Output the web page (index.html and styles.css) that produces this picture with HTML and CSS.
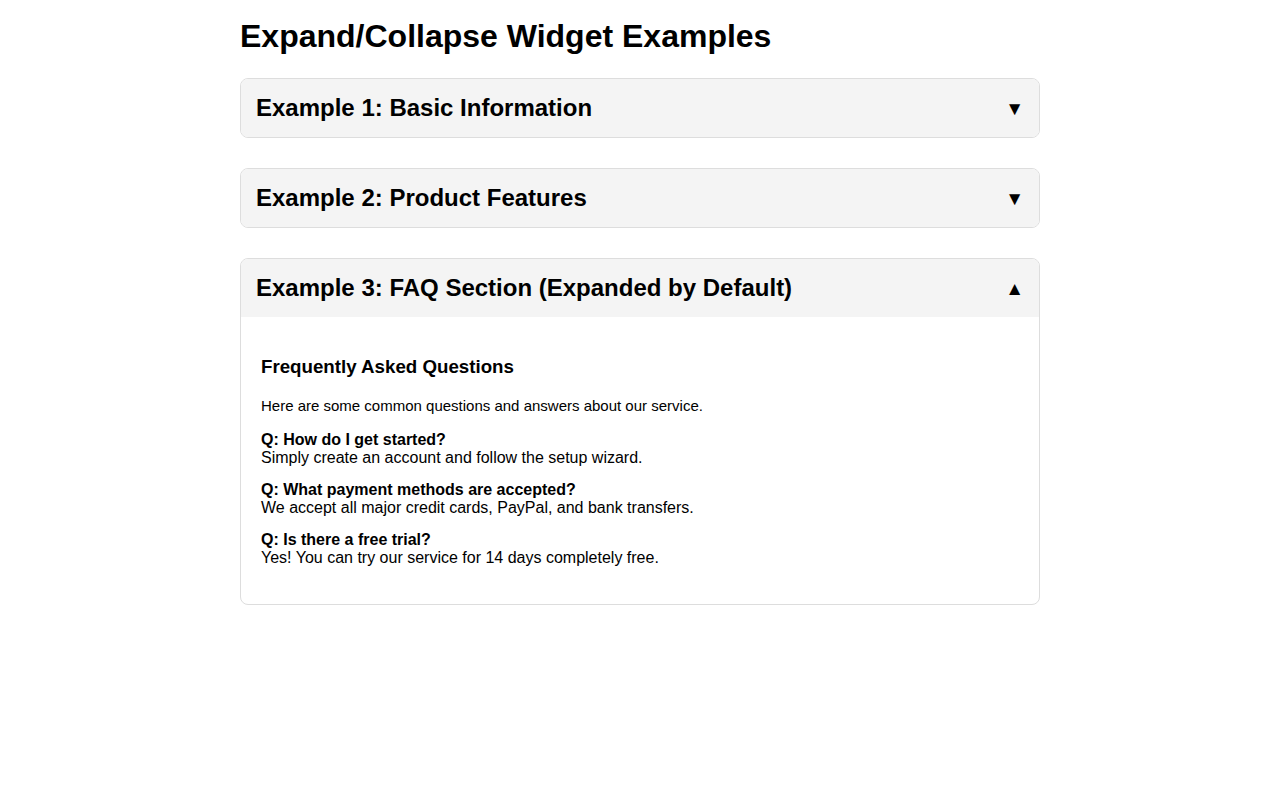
FILE: index.html
```html
<!DOCTYPE html>
<html lang="en">
<head>
<meta charset="utf-8">
<title>Expand/Collapse Widget Examples</title>
<link rel="stylesheet" href="styles.css">
</head>
<body>
<div class="container">
  <h1 class="page-title">Expand/Collapse Widget Examples</h1>

  <div class="widget">
    <div class="widget-header">
      <h2 class="widget-title">Example 1: Basic Information</h2>
      <span class="toggle-icon">▼</span>
    </div>
  </div>

  <div class="widget">
    <div class="widget-header">
      <h2 class="widget-title">Example 2: Product Features</h2>
      <span class="toggle-icon">▼</span>
    </div>
  </div>

  <div class="widget">
    <div class="widget-header">
      <h2 class="widget-title">Example 3: FAQ Section (Expanded by Default)</h2>
      <span class="toggle-icon">▲</span>
    </div>
    <div class="widget-content">
      <h3 class="content-title">Frequently Asked Questions</h3>
      <p class="intro">Here are some common questions and answers about our service.</p>
      <div class="faq-item"><strong>Q: How do I get started?</strong><br>Simply create an account and follow the setup wizard.</div>
      <div class="faq-item"><strong>Q: What payment methods are accepted?</strong><br>We accept all major credit cards, PayPal, and bank transfers.</div>
      <div class="faq-item"><strong>Q: Is there a free trial?</strong><br>Yes! You can try our service for 14 days completely free.</div>
    </div>
  </div>
</div>
</body>
</html>
```
FILE: styles.css
```css
html, body {
  margin: 0;
  padding: 0;
  background: #fff;
}
body {
  font-family: "Liberation Sans", Arial, sans-serif;
  color: #000;
}
.container {
  width: 800px;
  margin: 0 auto;
  padding-top: 18px;
}
.page-title {
  font-size: 32px;
  font-weight: bold;
  margin: 0 0 23px;
}
.widget {
  border: 1px solid #ddd;
  border-radius: 8px;
  margin-bottom: 30px;
  overflow: hidden;
}
.widget-header {
  background: #f4f4f4;
  padding: 15px;
  display: flex;
  justify-content: space-between;
  align-items: center;
}
.widget-title {
  margin: 0;
  font-size: 24px;
  font-weight: bold;
}
.toggle-icon {
  font-size: 19px;
  line-height: 1;
}
.widget-content {
  padding: 20px;
}
.content-title {
  font-size: 18.72px;
  margin: 18.72px 0;
}
.intro {
  font-size: 15px;
  line-height: 17px;
  margin: 19px 0 17px;
}
.faq-item {
  font-size: 16px;
  margin-bottom: 14px;
}
.faq-item:last-child {
  margin-bottom: 17px;
}
```
